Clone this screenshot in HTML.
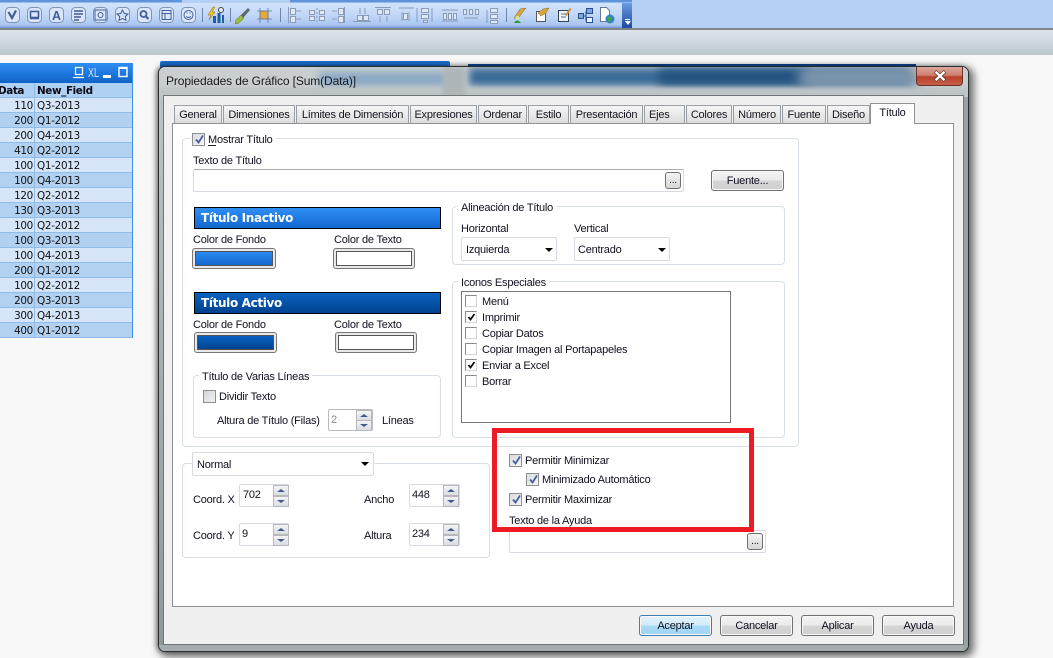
<!DOCTYPE html>
<html><head><meta charset="utf-8"><style>
html,body{margin:0;padding:0;width:1053px;height:658px;overflow:hidden;background:#f8f8f8}
*{box-sizing:border-box}
body{position:relative;font-family:"Liberation Sans",sans-serif;font-size:11px;letter-spacing:-.22px;color:#101020}
svg{letter-spacing:0}
.a{position:absolute}
.t{position:absolute;white-space:nowrap;line-height:16px;height:16px;margin-top:1px}
.g{position:absolute;border:1px solid #d8dfe6;border-radius:4px}
.l{position:absolute;white-space:nowrap;line-height:14px;height:14px;background:#fff;padding:1px 3px 0}
.i{position:absolute;border:1px solid #d5dbe1;border-top-color:#a9adb2;border-radius:2px;background:#fff}
.tab{position:absolute;top:105px;height:18px;border:1px solid #9a9fa5;border-bottom:0;background:linear-gradient(#f6f6f6,#dcdcdc);text-align:center;line-height:19px;white-space:nowrap;color:#15151f}
.cb{position:absolute;width:13px;height:13px;border:1px solid #8e8f8f;background:linear-gradient(135deg,#d8dbe0,#f4f5f7)}
.cb.n{background:#fff;border-color:#8a8a8a;border-bottom-color:#d5d5d5;border-right-color:#d5d5d5}
.cb svg{position:absolute;left:1px;top:0}
.btn{position:absolute;width:73px;height:21px;border:1px solid #707070;border-radius:3px;background:linear-gradient(#f4f4f4 0,#ebebeb 48%,#d6d6d6 52%,#cfcfcf 100%);text-align:center;line-height:21px;color:#101020;box-shadow:inset 0 0 0 1px #f8f8f8}
.dots{position:absolute;width:16px;height:17px;border:1px solid #707070;border-radius:3px;background:linear-gradient(#f4f4f4,#d6d6d6);text-align:center;line-height:16px;font-size:10px;color:#111}
.sw{position:absolute;height:21px;border:1px solid #777;border-radius:3px;background:#e8e8e8}
.sw i{position:absolute;left:2px;top:2px;right:2px;bottom:2px;border:1px solid #555;display:block}
.bar{position:absolute;left:194px;width:247px;height:22px;border:1px solid #000;color:#fff;font:bold 12px/20px "DejaVu Sans",sans-serif;letter-spacing:-.35px;padding-left:6px}
.arr{position:absolute;width:0;height:0;border-left:4px solid transparent;border-right:4px solid transparent;border-top:4px solid #000}
.sp{position:absolute;width:16px;height:11px;border:1px solid #b5b9bd;background:linear-gradient(#f4f4f6,#dadde2)}
.sp:after{content:"";position:absolute;left:3px;top:3px;border-left:4px solid transparent;border-right:4px solid transparent}
.sp.u:after{border-bottom:3px solid #42598c}
.sp.d:after{border-top:3px solid #42598c}
.row{position:absolute;left:0;width:133px;height:15px;border-bottom:1px solid #8fbdea;font:10.4px/16px "DejaVu Sans",sans-serif;letter-spacing:-.3px;color:#111}
.row b{position:absolute;left:0;width:33px;text-align:right;font-weight:normal}
.row u{position:absolute;left:37px;text-decoration:none}
.row:before{content:"";position:absolute;left:34px;top:0;bottom:0;width:1px;background:#8fbdea}
</style></head><body>

<!-- top toolbar area -->
<div class="a" style="left:0;top:0;width:1053px;height:28px;background:#b5cff5"></div>
<div class="a" style="left:0;top:0;width:632px;height:28px;background:linear-gradient(#5f93dc 0,#5f93dc 2px,#d2e3fb 3px,#c4d9f8 50%,#a9c6f0 90%,#6d97d8 100%)"></div>
<div class="a" style="left:182px;top:0;width:108px;height:3px;background:#b5cff5"></div>
<div class="a" style="left:622px;top:3px;width:10px;height:25px;background:linear-gradient(#6c9be0,#1c4b9c)"></div>
<div class="a" style="left:625px;top:19px;width:5px;height:1px;background:#fff"></div>
<div class="arr" style="left:625px;top:21px;border-left-width:3px;border-right-width:3px;border-top-color:#fff"></div>
<svg class="a" style="left:0;top:0" width="632" height="28" viewBox="0 0 632 28">
<g fill="#dbe7f9" stroke="#7e93b6" stroke-width="1">
<rect x="5.5" y="7.5" width="14" height="15" rx="4"/><rect x="27.5" y="7.5" width="14" height="15" rx="4"/><rect x="49.5" y="7.5" width="14" height="15" rx="4"/><rect x="71.5" y="7.5" width="14" height="15" rx="4"/><rect x="93.5" y="7.5" width="14" height="15" rx="4"/><rect x="115.5" y="7.5" width="14" height="15" rx="4"/><rect x="137.5" y="7.5" width="14" height="15" rx="4"/><rect x="159.5" y="7.5" width="14" height="15" rx="4"/><rect x="181.5" y="7.5" width="14" height="15" rx="4"/>
</g>
<path d="M8.5 12l3.5 6 4-7.5" fill="none" stroke="#3f5c9c" stroke-width="2.2"/>
<rect x="30.5" y="11.5" width="8" height="6" fill="none" stroke="#3f5c9c" stroke-width="1.6"/><path d="M30 18.5h9" stroke="#3f5c9c" stroke-width="1.5"/>
<text x="52" y="20" font-family="Liberation Sans" font-weight="bold" font-size="12.5" fill="#3f5c9c">A</text>
<path d="M74 11h9M74 14h9M74 17h7M74 20h5" stroke="#3f5c9c" stroke-width="1.4"/>
<rect x="95" y="10" width="11" height="10" fill="none" stroke="#3f5c9c"/><circle cx="100.500" cy="15" r="2.500" fill="none" stroke="#3f5c9c"/>
<path d="M122.500 10l1.800 3.500 3.700.5-2.700 2.600.7 3.700-3.500-1.800-3.500 1.800.7-3.700-2.700-2.600 3.700-.5z" fill="#cfe0f7" stroke="#3f5c9c"/>
<circle cx="143.500" cy="14" r="3" fill="none" stroke="#3f5c9c" stroke-width="1.800"/><path d="M146 16.500l2.500 2.500" stroke="#3f5c9c" stroke-width="2"/>
<rect x="162" y="10.500" width="9" height="9" fill="none" stroke="#3f5c9c"/><path d="M162 13.500h9M165 13.500v6" stroke="#3f5c9c"/>
<circle cx="188.500" cy="15" r="4.500" fill="none" stroke="#3f5c9c"/><path d="M186 16.500q2.500 2 5 0" fill="none" stroke="#3f5c9c"/><path d="M186.500 13h1M189.500 13h1" stroke="#3f5c9c"/>
<path d="M202.500 8v14M230.500 8v14M280.500 8v14M506.500 8v14" stroke="#6f86aa"/>
<path d="M213 7l-5 8h3l-2 5 6-8h-3l3-5z" fill="#f5c71a" stroke="#8a6a10" stroke-width=".5"/>
<path d="M213 23v-7h3v7zM217.500 23v-10h3v10zM222 23v-8h2v8z" fill="#1d5da6"/><circle cx="221" cy="10" r="2.500" fill="#e6eef8" stroke="#444"/>
<path d="M236 20l5-5 3 3-5 5-4 1z" fill="#9bbd3c" stroke="#5c7a24" stroke-width=".5"/><path d="M241 15l7-7 2 2-7 8z" fill="#5a6a70"/>
<rect x="260" y="11" width="8" height="8" fill="#e8a83a" stroke="#a07018" stroke-width=".5"/><path d="M260 8v15M268 8v15M257 11h15M257 19h15" stroke="#5878a8" stroke-width=".8" fill="none"/>
<g stroke="#8a9cb8" stroke-width="1" fill="#dfe8f5">
<path d="M288.500 7v16"/><rect x="290.500" y="8.500" width="5" height="6"/><rect x="290.500" y="16.500" width="5" height="6"/><path d="M296 11h5M296 19h5" fill="none"/>
<path d="M317 8v14" stroke-dasharray="2 2"/><rect x="309.500" y="10.500" width="5" height="4"/><rect x="319.500" y="10.500" width="5" height="4"/><rect x="309.500" y="16.500" width="5" height="4"/><rect x="319.500" y="16.500" width="5" height="4"/>
<path d="M344.500 7v16"/><rect x="338.500" y="8.500" width="5" height="6"/><rect x="338.500" y="16.500" width="5" height="6"/><path d="M332 11h5M332 19h5" fill="none"/>
<rect x="357.500" y="15.500" width="5" height="5"/><rect x="363.500" y="15.500" width="5" height="5"/><path d="M353 21.500h18M360 8v6M365 8v6"/>
<rect x="377.500" y="9.500" width="5" height="5"/><rect x="384.500" y="9.500" width="5" height="5"/><path d="M375 7.500h16M380 16v6M387 16v6"/>
<rect x="421.500" y="8.500" width="7" height="4"/><rect x="421.500" y="14.500" width="7" height="4"/><rect x="423.500" y="20.500" width="4" height="2"/><path d="M417 8v14M432 8v14"/>
<rect x="443.500" y="13.500" width="3" height="6"/><rect x="448.500" y="13.500" width="3" height="6"/><rect x="453.500" y="13.500" width="3" height="6"/><path d="M442 10h16M442 21h16"/>
<rect x="463.500" y="9.500" width="3" height="5"/><rect x="469.500" y="9.500" width="3" height="5"/><rect x="475.500" y="9.500" width="3" height="5"/><path d="M464 18h14"/>
<rect x="490.500" y="8.500" width="7" height="4"/><rect x="490.500" y="14.500" width="7" height="4"/><rect x="490.500" y="20.500" width="7" height="3"/><path d="M487 10v13"/>
<path d="M399 8h15M402 12v9M409 12v9"/><rect x="403.500" y="13.500" width="4" height="6"/>
</g>
<path d="M514 18l6-9 6-1-4 5-4 6z" fill="#d8a63c" stroke="#8a6a1c" stroke-width=".5"/><path d="M514 23q3-5 7 0z" fill="#2f9a3c"/><circle cx="517.500" cy="18" r="2" fill="#cfe8a8"/>
<rect x="536.500" y="11.500" width="9" height="10" fill="#fff" stroke="#555"/><path d="M538 13l5-4 6-1-3 5-5 3z" fill="#d8a63c" stroke="#8a6a1c" stroke-width=".5"/>
<rect x="558.500" y="10.500" width="10" height="11" fill="#eef3fa" stroke="#345"/><path d="M561 14h5M561 17h5" stroke="#668"/><path d="M565 15l5-7 1.500 1-5 7z" fill="#d88a2c"/>
<rect x="578.500" y="13.500" width="5" height="5" fill="#7ba6df" stroke="#27508f"/><rect x="586.500" y="8.500" width="6" height="5" fill="#7ba6df" stroke="#27508f"/><rect x="586.500" y="17.500" width="6" height="5" fill="#eef3fa" stroke="#27508f"/><path d="M584 16h2M586 11v10" stroke="#27508f" fill="none"/>
<path d="M600.500 7.500h6l3 3v11h-9z" fill="#fff" stroke="#6a7a8c"/><circle cx="610" cy="19" r="4.500" fill="#2d8ac8"/><path d="M608 16.500l3 1 0 3-3 1.500z" fill="#46a83c"/>
</svg>
<div class="a" style="left:0;top:28px;width:1053px;height:2px;background:#808486"></div>
<div class="a" style="left:0;top:30px;width:1053px;height:25px;background:linear-gradient(#dde5ea,#d0dbe0 40%,#bcc8cc)"></div>

<!-- background windows -->
<div class="a" style="left:160px;top:61px;width:290px;height:10px;background:#1a6fd0;border-radius:2px 2px 0 0"></div>
<div class="a" style="left:468px;top:64px;width:448px;height:8px;background:#0b4a98"></div>

<!-- left table -->
<div class="a" style="left:0;top:63px;width:133px;height:20px;background:linear-gradient(#2f8ef5,#0f62c6)"></div>
<svg class="a" style="left:72px;top:64px" width="62" height="18" viewBox="0 0 62 18">
<path d="M3.500 3.500h7v7h-7zM1 13.500h11" fill="none" stroke="#fff" stroke-width="1.200"/>
<text x="16" y="13" font-family="Liberation Sans" font-size="13" fill="#cfe3fb" textLength="11" lengthAdjust="spacingAndGlyphs">XL</text>
<rect x="31" y="11" width="8" height="3" fill="#fff"/>
<rect x="47" y="3.500" width="8" height="9" fill="none" stroke="#fff" stroke-width="1.400"/><rect x="47" y="3" width="8" height="2" fill="#fff"/>
</svg>
<div class="a" style="left:0;top:83px;width:133px;height:15px;background:#aed0f2;font:bold 10.4px/15px 'DejaVu Sans',sans-serif;letter-spacing:-.4px;color:#0a0a14;border-bottom:1px solid #8fbdea"><span style="position:absolute;left:-2px;top:1px">Data</span><span style="position:absolute;left:37px;top:1px">New_Field</span><span style="position:absolute;left:34px;top:0;bottom:0;width:1px;background:#8fbdea"></span></div>
<div class="row" style="top:98px;background:#d6e6f8"><b>110</b><u>Q3-2013</u></div>
<div class="row" style="top:113px;background:#b2d1f0"><b>200</b><u>Q1-2012</u></div>
<div class="row" style="top:128px;background:#d6e6f8"><b>200</b><u>Q4-2013</u></div>
<div class="row" style="top:143px;background:#b2d1f0"><b>410</b><u>Q2-2012</u></div>
<div class="row" style="top:158px;background:#d6e6f8"><b>100</b><u>Q1-2012</u></div>
<div class="row" style="top:173px;background:#b2d1f0"><b>100</b><u>Q4-2013</u></div>
<div class="row" style="top:188px;background:#d6e6f8"><b>120</b><u>Q2-2012</u></div>
<div class="row" style="top:203px;background:#b2d1f0"><b>130</b><u>Q3-2013</u></div>
<div class="row" style="top:218px;background:#d6e6f8"><b>100</b><u>Q2-2012</u></div>
<div class="row" style="top:233px;background:#b2d1f0"><b>100</b><u>Q3-2013</u></div>
<div class="row" style="top:248px;background:#d6e6f8"><b>100</b><u>Q4-2013</u></div>
<div class="row" style="top:263px;background:#b2d1f0"><b>200</b><u>Q1-2012</u></div>
<div class="row" style="top:278px;background:#d6e6f8"><b>100</b><u>Q2-2012</u></div>
<div class="row" style="top:293px;background:#b2d1f0"><b>200</b><u>Q3-2013</u></div>
<div class="row" style="top:308px;background:#d6e6f8"><b>300</b><u>Q4-2013</u></div>
<div class="row" style="top:323px;background:#b2d1f0"><b>400</b><u>Q1-2012</u></div>
<div class="a" style="left:132px;top:63px;width:1px;height:275px;background:#3a8ff0"></div>

<!-- dialog frame -->
<div class="a" style="left:158px;top:66px;width:811px;height:586px;border-radius:7px;background:#c4cacc;border:1px solid #2a2f33;box-shadow:3px 3px 8px 2px rgba(0,0,0,.55),-2px 0 5px rgba(0,0,0,.35);overflow:hidden">
  <div class="a" style="left:0;top:0;width:810px;height:30px;background:#c9cfd0;overflow:hidden">
    <div class="a" style="left:160px;top:6px;width:130px;height:12px;background:#7c9fc2;filter:blur(5px)"></div>
    <div class="a" style="left:310px;top:1px;width:440px;height:18px;background:#3a6a98;filter:blur(4px)"></div>
    <div class="a" style="left:500px;top:2px;width:150px;height:16px;background:#24527f;filter:blur(5px)"></div>
    <div class="a" style="left:640px;top:0;width:120px;height:22px;background:#7d95ac;filter:blur(6px)"></div>
    <div class="a" style="left:0;top:21px;width:810px;height:9px;background:#bcc4c6;filter:blur(2px)"></div>
    <div class="a" style="left:284px;top:0;width:22px;height:30px;background:#adb5b8;filter:blur(2px)"></div>
  </div>
  <div class="a" style="left:0;top:30px;width:5px;height:556px;background:linear-gradient(#bcc3c5,#8f979a)"></div>
  <div class="a" style="left:0;top:578px;width:810px;height:7px;background:#a6acae"></div>
  <div class="a" style="left:805px;top:30px;width:5px;height:556px;background:#9aa1a3"></div>
</div>
<div class="t" style="left:166px;top:73px;margin-top:0;font-size:12px;letter-spacing:-.12px;color:#1a1a20">Propiedades de Gráfico [Sum(Data)]</div>
<!-- close -->
<div class="a" style="left:916px;top:67px;width:47px;height:19px;border:1px solid #6e3028;border-top:0;border-radius:0 0 4px 4px;background:linear-gradient(#dba79b 0,#cf8070 45%,#b8402a 55%,#c8604a 100%)"></div>
<svg class="a" style="left:933px;top:70px" width="14" height="12" viewBox="0 0 14 12"><path d="M2 1.500l10 9M12 1.500l-10 9" stroke="#4a2a24" stroke-width="3.600"/><path d="M2.500 1.800l9 8.400M11.500 1.800l-9 8.400" stroke="#fff" stroke-width="2.400"/></svg>

<!-- client area -->
<div class="a" style="left:163px;top:95px;width:801px;height:550px;background:#f0f0f0;border:1px solid #70757a"></div>
<div class="a" style="left:172px;top:123px;width:782px;height:484px;background:#fff;border:1px solid #8e9297"></div>

<!-- tabs -->
<div class="tab" style="left:174px;width:48px">General</div>
<div class="tab" style="left:223px;width:72px">Dimensiones</div>
<div class="tab" style="left:296px;width:113px">Límites de Dimensión</div>
<div class="tab" style="left:410px;width:67px">Expresiones</div>
<div class="tab" style="left:478px;width:49px">Ordenar</div>
<div class="tab" style="left:528px;width:41px">Estilo</div>
<div class="tab" style="left:570px;width:73px">Presentación</div>
<div class="tab" style="left:644px;width:41px;text-align:left;padding-left:4px">Ejes</div>
<div class="tab" style="left:686px;width:46px">Colores</div>
<div class="tab" style="left:733px;width:48px">Número</div>
<div class="tab" style="left:782px;width:44px">Fuente</div>
<div class="tab" style="left:827px;width:43px">Diseño</div>
<div class="a" style="left:870px;top:103px;width:45px;height:21px;background:#fff;border:1px solid #8e9297;border-bottom:0;text-align:center;line-height:18px">Título</div>

<!-- main group -->
<div class="g" style="left:182px;top:138px;width:617px;height:309px"></div>
<div class="l" style="left:190px;top:132px;width:86px;height:14px"></div>
<div class="cb" style="left:192px;top:133px"><svg width="11" height="11" viewBox="0 0 11 11"><path d="M2 5.500l2.500 3 4.500-7" fill="none" stroke="#4a5f9c" stroke-width="1.800"/></svg></div>
<div class="t" style="left:208px;top:131px">Mostrar Título</div>
<div class="a" style="left:208px;top:145px;width:8px;height:1px;background:#222"></div>
<div class="t" style="left:193px;top:152px">Texto de Título</div>
<div class="i" style="left:193px;top:169px;width:491px;height:23px"></div>
<div class="dots" style="left:665px;top:172px">...</div>
<div class="btn" style="left:711px;top:170px;height:21px">Fuente...</div>

<div class="bar" style="top:207px;background:linear-gradient(#2f8ef5,#1268cf)">Título Inactivo</div>
<div class="t" style="left:193px;top:231px">Color de Fondo</div>
<div class="t" style="left:334px;top:231px">Color de Texto</div>
<div class="sw" style="left:192px;top:248px;width:84px"><i style="background:linear-gradient(#2b8af0,#1268cf)"></i></div>
<div class="sw" style="left:333px;top:248px;width:82px"><i style="background:#fff"></i></div>

<div class="bar" style="top:292px;background:linear-gradient(#0a62c0,#00428f)">Título Activo</div>
<div class="t" style="left:193px;top:316px">Color de Fondo</div>
<div class="t" style="left:334px;top:316px">Color de Texto</div>
<div class="sw" style="left:194px;top:332px;width:83px"><i style="background:linear-gradient(#0a62c0,#00428f)"></i></div>
<div class="sw" style="left:335px;top:332px;width:82px"><i style="background:#fff"></i></div>

<div class="g" style="left:193px;top:375px;width:248px;height:63px"></div>
<div class="l" style="left:199px;top:369px">Título de Varias Líneas</div>
<div class="cb" style="left:203px;top:390px;background:linear-gradient(135deg,#d4d6d9,#f0f1f3)"></div>
<div class="t" style="left:219px;top:388px">Dividir Texto</div>
<div class="t" style="left:217px;top:412px">Altura de Título (Filas)</div>
<div class="i" style="left:328px;top:409px;width:45px;height:22px;border-color:#bbb"></div>
<div class="t" style="left:331px;top:411px;color:#8a8a8a">2</div>
<div class="sp u" style="left:356px;top:410px"></div><div class="sp d" style="left:356px;top:420px"></div>
<div class="t" style="left:382px;top:412px">Líneas</div>

<div class="g" style="left:452px;top:206px;width:333px;height:59px"></div>
<div class="l" style="left:458px;top:200px">Alineación de Título</div>
<div class="t" style="left:461px;top:220px">Horizontal</div>
<div class="t" style="left:574px;top:220px">Vertical</div>
<div class="i" style="left:461px;top:237px;width:96px;height:24px;border-color:#d5dbe1"></div>
<div class="t" style="left:466px;top:241px">Izquierda</div>
<div class="arr" style="left:545px;top:248px"></div>
<div class="i" style="left:574px;top:237px;width:96px;height:24px;border-color:#d5dbe1"></div>
<div class="t" style="left:578px;top:241px">Centrado</div>
<div class="arr" style="left:658px;top:248px"></div>

<div class="g" style="left:452px;top:281px;width:333px;height:157px"></div>
<div class="l" style="left:458px;top:275px">Iconos Especiales</div>
<div class="a" style="left:461px;top:291px;width:270px;height:132px;border:1px solid #777;background:#fff"></div>
<div class="cb n" style="left:465px;top:295px;width:12px;height:12px"></div><div class="t" style="left:482px;top:293px">Menú</div>
<div class="cb n" style="left:465px;top:311px;width:12px;height:12px"><svg width="10" height="10" viewBox="0 0 10 10"><path d="M1.500 5l2 2.500 4-5.500" fill="none" stroke="#111" stroke-width="1.800"/></svg></div><div class="t" style="left:482px;top:309px">Imprimir</div>
<div class="cb n" style="left:465px;top:327px;width:12px;height:12px"></div><div class="t" style="left:482px;top:325px">Copiar Datos</div>
<div class="cb n" style="left:465px;top:343px;width:12px;height:12px"></div><div class="t" style="left:482px;top:341px">Copiar Imagen al Portapapeles</div>
<div class="cb n" style="left:465px;top:359px;width:12px;height:12px"><svg width="10" height="10" viewBox="0 0 10 10"><path d="M1.500 5l2 2.500 4-5.500" fill="none" stroke="#111" stroke-width="1.800"/></svg></div><div class="t" style="left:482px;top:357px">Enviar a Excel</div>
<div class="cb n" style="left:465px;top:375px;width:12px;height:12px"></div><div class="t" style="left:482px;top:373px">Borrar</div>

<!-- lower-left group -->
<div class="g" style="left:182px;top:463px;width:308px;height:95px"></div>
<div class="i" style="left:192px;top:452px;width:182px;height:24px;border-color:#d5dbe1"></div>
<div class="t" style="left:197px;top:456px">Normal</div>
<div class="arr" style="left:361px;top:462px"></div>
<div class="t" style="left:193px;top:491px">Coord. X</div>
<div class="i" style="left:239px;top:484px;width:50px;height:23px;border-color:#d5dbe1"></div>
<div class="t" style="left:243px;top:486px">702</div>
<div class="sp u" style="left:273px;top:485px"></div><div class="sp d" style="left:273px;top:496px"></div>
<div class="t" style="left:364px;top:491px">Ancho</div>
<div class="i" style="left:409px;top:484px;width:51px;height:23px;border-color:#d5dbe1"></div>
<div class="t" style="left:412px;top:486px">448</div>
<div class="sp u" style="left:443px;top:485px"></div><div class="sp d" style="left:443px;top:496px"></div>
<div class="t" style="left:193px;top:527px">Coord. Y</div>
<div class="i" style="left:239px;top:523px;width:50px;height:23px;border-color:#d5dbe1"></div>
<div class="t" style="left:242px;top:525px">9</div>
<div class="sp u" style="left:273px;top:524px"></div><div class="sp d" style="left:273px;top:535px"></div>
<div class="t" style="left:364px;top:527px">Altura</div>
<div class="i" style="left:409px;top:523px;width:51px;height:23px;border-color:#d5dbe1"></div>
<div class="t" style="left:412px;top:525px">234</div>
<div class="sp u" style="left:443px;top:524px"></div><div class="sp d" style="left:443px;top:535px"></div>

<!-- right lower -->
<div class="cb" style="left:509px;top:454px"><svg width="11" height="11" viewBox="0 0 11 11"><path d="M2 5.500l2.500 3 4.500-7" fill="none" stroke="#4a5f9c" stroke-width="1.800"/></svg></div>
<div class="t" style="left:525px;top:452px">Permitir Minimizar</div>
<div class="cb" style="left:526px;top:473px"><svg width="11" height="11" viewBox="0 0 11 11"><path d="M2 5.500l2.500 3 4.500-7" fill="none" stroke="#4a5f9c" stroke-width="1.800"/></svg></div>
<div class="t" style="left:542px;top:471px">Minimizado Automático</div>
<div class="cb" style="left:509px;top:493px"><svg width="11" height="11" viewBox="0 0 11 11"><path d="M2 5.500l2.500 3 4.500-7" fill="none" stroke="#4a5f9c" stroke-width="1.800"/></svg></div>
<div class="t" style="left:525px;top:491px">Permitir Maximizar</div>
<div class="t" style="left:509px;top:512px">Texto de la Ayuda</div>
<div class="i" style="left:509px;top:530px;width:257px;height:23px;border-color:#d5dbe1"></div>
<div class="dots" style="left:747px;top:533px">...</div>

<!-- red annotation -->
<div class="a" style="left:492px;top:428px;width:262px;height:104px;border:5px solid #ed1c24"></div>

<!-- bottom buttons -->
<div class="btn" style="left:639px;top:615px;border-color:#3c7fb1;background:linear-gradient(#e6f4fc 0,#d2ebfa 48%,#a9dbf6 52%,#a0d4f2 100%)">Aceptar</div>
<div class="btn" style="left:720px;top:615px">Cancelar</div>
<div class="btn" style="left:801px;top:615px">Aplicar</div>
<div class="btn" style="left:882px;top:615px">Ayuda</div>
</body></html>
